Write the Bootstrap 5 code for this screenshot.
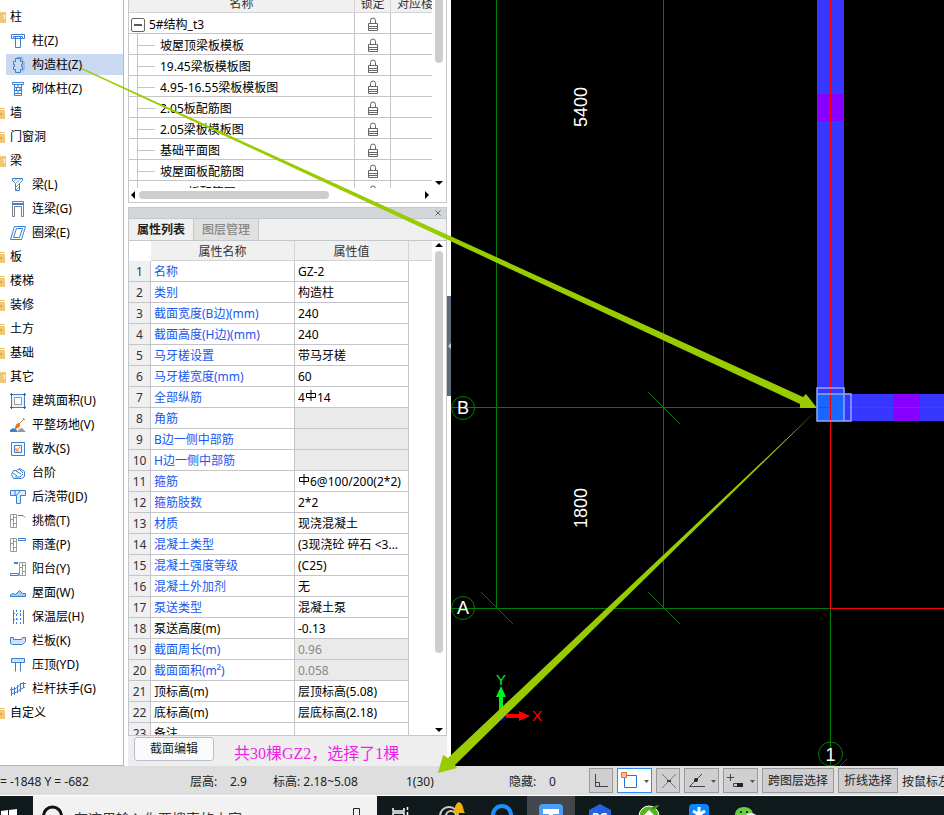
<!DOCTYPE html>
<html lang="zh-CN">
<head>
<meta charset="utf-8">
<meta name="viewport" content="width=device-width, initial-scale=1">
<title>属性列表</title>
<link rel="stylesheet" href="https://cdn.jsdelivr.net/npm/bootstrap@5.3.0/dist/css/bootstrap.min.css">
<style>
body{font:12px/20px "Noto Sans","Noto Sans CJK SC",sans-serif;color:#000;background:#fff}
svg{display:block;flex:none}
button{font:inherit;color:inherit}
/* component tree */
.tree{width:124px;border-right:1px solid #b4b6ba;border-bottom:1px solid #b4b6ba;padding-top:5px}
.tree a{display:flex;align-items:center;height:24px;color:#000;text-decoration:none;white-space:nowrap}
.tree .grp{gap:4px}
.tree .leaf{gap:6px;padding-left:4px;margin-left:6px}
.tree .leaf.active{background:#c9d9ef;height:21px;margin-top:1px;margin-bottom:2px}
.tree .leaf svg{fill:none;stroke:#3a7fd0}
/* docked panels */
.docks{width:327px;padding:0 4px;gap:4px}
.dock{border:1px solid #c4c7cc;background:#fff}
.layerbox{height:188px}
.hbar{height:14px;padding:0 17px 0 2px;gap:4px}
.hthumb{width:190px;height:8px}
.vthumb{width:8px;height:402px}
.vthumb-top{width:8px;height:63px}
.grid{table-layout:fixed;width:100%;border-collapse:separate;border-spacing:0}
.grid td,.grid th{height:21px;line-height:18px;padding:2px 3px 0;border-right:1px solid #c4c4c9;border-bottom:1px solid #c4c4c9;white-space:nowrap;overflow:hidden;text-overflow:ellipsis}
.grid th{height:20px;line-height:17px;font-weight:400;text-align:center;background:#f0f0f0;color:#333;border-color:#d4d4d8}
.grid tr>:last-child{border-right:0}
.layers{margin-top:-7px}
.layers td{text-overflow:clip;line-height:16px;padding-top:4px}
.layers td:first-child{padding-left:31px;background:linear-gradient(#c4c4c9,#c4c4c9) 8px 0/1px 100% no-repeat,linear-gradient(#c4c4c9,#c4c4c9) 9px 11px/17px 1px no-repeat}
.layers tr.root td:first-child{padding-left:2px;padding-top:3px;background:none}
.layers td>svg{margin:-2px auto 0}
.layers th:last-child{text-align:left;padding-left:6px;text-overflow:clip}
.expander{width:14px;height:14px;border:1px solid #666;border-radius:2px;background:#fff;padding:0}
.vbar{width:14px}
.vbar.full{padding:2px 0 3px}
.thumb{background:#cdcdcd;border-radius:4px}
.titlebar{height:11px;background:#d3d6db;border-bottom:1px solid #c4c7cc}
.tabs{height:22px;background:#efefef;border-bottom:1px solid #c4c7cc}
.tabs button{width:65px;height:21px;border:0;border-right:1px solid #c4c7cc;background:#e0e0e0;color:#888;font-weight:500;padding:0}
.tabs button.active{background:#f0f0f0;color:#222;font-weight:600}
.props td:first-child{background:#f0f0f0;text-align:center;color:#333;padding-left:0;padding-right:0}
.props th:first-child{background:#fff;border:0}
.props td:nth-child(2){color:#1857f0}
.props .plain td:nth-child(2){color:#000}
.props .off td:nth-child(3){background:#eaeaea;color:#888}
.props td:nth-child(4){border:0}
.props .bar{display:inline-block;vertical-align:1px}
.dockfoot{height:30px;background:#eee;padding:0 6px;gap:20px}
.dockfoot button{width:80px;height:24px;border:1px solid #b8c0d0;border-radius:3px;background:#fafafa;color:#222;padding:0}
.note{font:16px/20px "Liberation Serif","Noto Sans CJK SC",serif;color:#f01ee6;padding-top:10px}
.handle{width:4px;height:100px;background:#5f6b78}
.splitter{width:4px;padding-top:296px;margin-left:-4px}
.drawing{background:#000;font-family:"Liberation Sans",sans-serif}
/* bottom bars */
.status{height:30px;background:#dededf;border-bottom:1px solid #fff;color:#222;white-space:nowrap}
.status span{flex:none;padding-top:2px}
.s1{width:190px}.s2{width:40px}.s3{width:43px}.s4{width:133px}.s5{width:103px}.s6{width:40px}
.tools{gap:4px}
.tools button{height:25px;border:1px solid #999;background:#cfcfd1;padding:1px 5px 0;flex:none}
.tools .sq{width:24px;padding:0 4px}
.tools .dd{width:35px;padding:0 3px}
.tools .picked{background:#fff;border-color:#2f8cf0}
.taskbar{height:19px;background:#10191b}
.taskrow{height:40px}
.start{width:33px;padding:13px 0 0 1px}
.search{width:344px;background:#f2f2f2;padding:0 16px 0 9px}
.search input{border:0;background:none;font-size:14px;height:24px;padding:0;margin-left:11px;margin-top:4px;min-width:0}
.search input::placeholder{color:#333;opacity:1}
.apps{gap:2px}
.apps button{width:48px;height:40px;border:0;padding:0;background:none}
.apps .open{background:#41474a}
.marks{left:0;top:0;pointer-events:none}
</style>
</head>
<body>
<div class="d-flex flex-column vh-100 overflow-hidden position-relative">
<main class="d-flex flex-grow-1 overflow-hidden">
<nav class="tree flex-shrink-0 overflow-hidden" aria-label="构件">
<svg width="0" height="0" class="position-absolute"><defs>
<g id="fo"><path d="M0 1H6V12H0Z" fill="#f0c878"/><path d="M0 4H3L5 9V4Z" fill="#fff5dc"/></g>
<g id="fc"><path d="M0 1H5V12H0Z" fill="#f0c878"/><path d="M0 2.500H5" stroke="#fff"/><path d="M0 7H2" stroke="#b98930"/></g>
</defs></svg>
<a class="grp" href="#"><svg width="6" height="13"><use href="#fo"/></svg>柱</a>
<a class="leaf" href="#"><svg width="16" height="16"><path d="M1.500 1.500h13v4h-2v-2h-9v2h-2zM5.500 3.500v11h5v-11M4 5.500h8"/></svg>柱(Z)</a>
<a class="leaf active" href="#"><svg width="16" height="16"><path d="M5.500 1.500h5v3h2v3h-1v2h1v3h-2v3h-5v-3h-2v-3h1v-2h-1v-3h2z"/><path d="M7 .5h5v3l2 1v8l-2 2" stroke="#8a9bb0"/></svg>构造柱(Z)</a>
<a class="leaf" href="#"><svg width="16" height="16"><path d="M2.500 1.500h11v2h-11zM4.500 3.500v11h7v-11M4.500 6.500h7M4.500 9.500h7M4.500 12.500h7M8 4v2M6.500 7v2M10 7v2M8 10v2"/></svg>砌体柱(Z)</a>
<a class="grp" href="#"><svg width="6" height="13"><use href="#fc"/></svg>墙</a>
<a class="grp" href="#"><svg width="6" height="13"><use href="#fc"/></svg>门窗洞</a>
<a class="grp" href="#"><svg width="6" height="13"><use href="#fo"/></svg>梁</a>
<a class="leaf" href="#"><svg width="16" height="16"><path d="M2.500 1.500h10v2l-3 3v7h-4v-7l-3-3z"/><path d="M4 4l3-2M6 6l5-4M6 10l3-3M6 13l3-3" stroke="#8aa"/></svg>梁(L)</a>
<a class="leaf" href="#"><svg width="16" height="16"><path d="M2.500 .5h11v15h-2v-10h-7v10h-2z" stroke="#777f88"/><path d="M3 3h10" stroke-width="2"/></svg>连梁(G)</a>
<a class="leaf" href="#"><svg width="16" height="16"><path d="M4.500 1.500h11l-4 13h-11zM6.500 3.500h6l-3 9h-6z"/></svg>圈梁(E)</a>
<a class="grp" href="#"><svg width="6" height="13"><use href="#fc"/></svg>板</a>
<a class="grp" href="#"><svg width="6" height="13"><use href="#fc"/></svg>楼梯</a>
<a class="grp" href="#"><svg width="6" height="13"><use href="#fc"/></svg>装修</a>
<a class="grp" href="#"><svg width="6" height="13"><use href="#fc"/></svg>土方</a>
<a class="grp" href="#"><svg width="6" height="13"><use href="#fc"/></svg>基础</a>
<a class="grp" href="#"><svg width="6" height="13"><use href="#fo"/></svg>其它</a>
<a class="leaf" href="#"><svg width="16" height="16"><path d="M1.500 1.500h13v13h-13z" fill="#eaf3fd"/><path d="M0 1.500h3M13 1.500h3M0 14.500h3M13 14.500h3M1.500 0v3M14.500 0v3M1.500 13v3M14.500 13v3" stroke="#36608f"/><path d="M4.500 4.500h7v7h-7z" stroke="#999" fill="#fff"/></svg>建筑面积(U)</a>
<a class="leaf" href="#"><svg width="16" height="16"><path d="M0 15v-2l3-2 3 1 2 3z" fill="#3a7fd0" stroke="none"/><path d="M7 15l2-3 3-1 4 4z" fill="#999" stroke="none"/><path d="M9 7l5-5M13 1l2 2" stroke="#ee7a30"/><path d="M5 12c0-4 2-6 4-6 2 2 1 5-4 6z" fill="#f07020" stroke="none"/></svg>平整场地(V)</a>
<a class="leaf" href="#"><svg width="16" height="16"><path d="M1.500 1.500h13v13h-13zM4.500 4.500h7v7h-7z" fill="#f2f8ff"/><path d="M10 6l-4 4M6 7v3h3" stroke="#ee7a30"/></svg>散水(S)</a>
<a class="leaf" href="#"><svg width="16" height="16"><path d="M1.500 9.500l2-4h3l3-2 5 3v5l-3 2h-8zM3 8l4 3M6 6l5 3M9 4l4 4M5 12h5l3-3"/></svg>台阶</a>
<a class="leaf" href="#"><svg width="16" height="16"><path d="M.5 1.500h15v5h-5v8h-4v-8h-6z" fill="#dcecfc"/><path d="M6 7l4-5M5 1.500v5"/></svg>后浇带(JD)</a>
<a class="leaf" href="#"><svg width="16" height="16"><path d="M.5 1.500h6v13h-6zM3.500 1v14M.5 6.500h3M3.500 10.500h3M3.500 4.500h3" stroke="#999"/><path d="M8 2.500h5l2 2"/></svg>挑檐(T)</a>
<a class="leaf" href="#"><svg width="16" height="16"><path d="M.5 1.500h6v13h-6zM3.500 1v14M.5 6.500h3M3.500 10.500h3M3.500 4.500h3" stroke="#999"/><path d="M8.500 1.500h7v2h-7z"/></svg>雨蓬(P)</a>
<a class="leaf" href="#"><svg width="16" height="16"><path d="M9.500 1.500h6v13h-6zM12.500 1v14M9.500 6.500h3M12.500 10.500h3M12.500 4.500h3" stroke="#999"/><path d="M4 2h4" stroke-width="2"/><path d="M.5 12.500h8v2h-8z"/></svg>阳台(Y)</a>
<a class="leaf" href="#"><svg width="16" height="16"><path d="M.5 11.500v-2l3-1 2 1 4-4 3 3h3v3z" fill="#a9c9ef"/></svg>屋面(W)</a>
<a class="leaf" href="#"><svg width="16" height="16"><path d="M3.500 1v14M13.500 1v14"/><path d="M6.500 1v14M10.500 1v14" stroke-dasharray="2 2"/><path d="M4 4.500h9M4 10.500h9" stroke-dasharray="1 2"/></svg>保温层(H)</a>
<a class="leaf" href="#"><svg width="16" height="16"><path d="M.5 4.500h3v2h8l1-2h3v4l-3 3h-10l-2-1z" fill="#cfe2f8"/></svg>栏板(K)</a>
<a class="leaf" href="#"><svg width="16" height="16"><path d="M1.500 1.500h13v4h-13z" fill="#cfe2f8"/><path d="M5.500 5.500v9M10.500 5.500v9"/></svg>压顶(YD)</a>
<a class="leaf" href="#"><svg width="16" height="16"><path d="M1.500 6v9M4.500 6v8M7.500 4v8M10.500 2v9M13.500 1v6M0 8.500h2l4-1 3-3 2-2h5M1 13l3-1 3-1 4-3 4-2"/></svg>栏杆扶手(G)</a>
<a class="grp" href="#"><svg width="6" height="13"><use href="#fc"/></svg>自定义</a>
</nav>
<div class="docks d-flex flex-column flex-shrink-0">
<section class="dock border-top-0 flex-shrink-0">
<div class="layerbox d-flex overflow-hidden">
<div class="flex-grow-1 overflow-hidden">
<svg width="0" height="0" class="position-absolute"><symbol id="lk" viewBox="0 0 12 14"><path d="M3.500 6V3.500a2.500 2.500 0 0 1 5 0V6M1.500 6.500h9v7h-9zM1 9.500h10M1 11.500h10" fill="none" stroke="#666"/></symbol></svg>
<table class="grid layers"><colgroup><col style="width:226px"><col style="width:36px"><col></colgroup>
<thead><tr><th>名称</th><th>锁定</th><th>对应楼层</th></tr></thead>
<tbody>
<tr class="root"><td><div class="d-flex align-items-center gap-1"><button class="expander" aria-label="折叠"><svg width="12" height="12"><path d="M2 6h8" stroke="#222" stroke-width="1.500"/></svg></button><span>5#结构_t3</span></div></td><td><svg width="12" height="14"><use href="#lk"/></svg></td><td></td></tr>
<tr><td>坡屋顶梁板模板</td><td><svg width="12" height="14"><use href="#lk"/></svg></td><td></td></tr>
<tr><td>19.45梁板模板图</td><td><svg width="12" height="14"><use href="#lk"/></svg></td><td></td></tr>
<tr><td>4.95-16.55梁板模板图</td><td><svg width="12" height="14"><use href="#lk"/></svg></td><td></td></tr>
<tr><td>2.05板配筋图</td><td><svg width="12" height="14"><use href="#lk"/></svg></td><td></td></tr>
<tr><td>2.05梁板模板图</td><td><svg width="12" height="14"><use href="#lk"/></svg></td><td></td></tr>
<tr><td>基础平面图</td><td><svg width="12" height="14"><use href="#lk"/></svg></td><td></td></tr>
<tr><td>坡屋面板配筋图</td><td><svg width="12" height="14"><use href="#lk"/></svg></td><td></td></tr>
<tr><td>-0.05板配筋图</td><td><svg width="12" height="14"><use href="#lk"/></svg></td><td></td></tr>
</tbody></table>
</div>
<div class="vbar d-flex flex-column align-items-center flex-shrink-0"><div class="thumb vthumb-top rounded-top-0"></div><svg class="mt-auto" width="8" height="7"><path d="M0 0h8L4 4z"/></svg></div>
</div>
<div class="hbar d-flex align-items-center"><svg width="4" height="8"><path d="M4 0v8L0 4z"/></svg><div class="thumb hthumb"></div><svg class="ms-auto" width="4" height="8"><path d="M0 0v8l4-4z"/></svg></div>
</section>
<section class="d-flex flex-column flex-grow-1 overflow-hidden">
<div class="dock d-flex flex-column flex-grow-1 overflow-hidden">
<div class="titlebar d-flex align-items-center justify-content-end pe-1 flex-shrink-0"><svg width="8" height="8"><path d="M1.500 1.500l5 5M6.500 1.500l-5 5" stroke="#666"/></svg></div>
<div class="tabs d-flex flex-shrink-0" role="tablist"><button class="active" role="tab">属性列表</button><button role="tab">图层管理</button></div>
<div class="d-flex flex-grow-1 overflow-hidden">
<div class="flex-grow-1 overflow-hidden">
<table class="grid props"><colgroup><col style="width:22px"><col style="width:144px"><col style="width:114px"><col></colgroup>
<thead><tr><th></th><th>属性名称</th><th>属性值</th><th></th></tr></thead>
<tbody>
<tr><td>1</td><td>名称</td><td>GZ-2</td><td></td></tr>
<tr><td>2</td><td>类别</td><td>构造柱</td><td></td></tr>
<tr><td>3</td><td>截面宽度(B边)(mm)</td><td>240</td><td></td></tr>
<tr><td>4</td><td>截面高度(H边)(mm)</td><td>240</td><td></td></tr>
<tr><td>5</td><td>马牙槎设置</td><td>带马牙槎</td><td></td></tr>
<tr><td>6</td><td>马牙槎宽度(mm)</td><td>60</td><td></td></tr>
<tr><td>7</td><td>全部纵筋</td><td>4<svg class="bar" width="12" height="11"><path d="M1.500 3.500h9v4h-9zM6 0v11" fill="none" stroke="#000"/></svg>14</td><td></td></tr>
<tr class="off"><td>8</td><td>角筋</td><td></td><td></td></tr>
<tr class="off"><td>9</td><td>B边一侧中部筋</td><td></td><td></td></tr>
<tr class="off"><td>10</td><td>H边一侧中部筋</td><td></td><td></td></tr>
<tr><td>11</td><td>箍筋</td><td><svg class="bar" width="12" height="11"><path d="M1.500 3.500h9v4h-9zM6 0v11" fill="none" stroke="#000"/></svg>6@100/200(2*2)</td><td></td></tr>
<tr><td>12</td><td>箍筋肢数</td><td>2*2</td><td></td></tr>
<tr><td>13</td><td>材质</td><td>现浇混凝土</td><td></td></tr>
<tr><td>14</td><td>混凝土类型</td><td>(3现浇砼 碎石 &lt;3...</td><td></td></tr>
<tr><td>15</td><td>混凝土强度等级</td><td>(C25)</td><td></td></tr>
<tr><td>16</td><td>混凝土外加剂</td><td>无</td><td></td></tr>
<tr><td>17</td><td>泵送类型</td><td>混凝土泵</td><td></td></tr>
<tr class="plain"><td>18</td><td>泵送高度(m)</td><td>-0.13</td><td></td></tr>
<tr class="off"><td>19</td><td>截面周长(m)</td><td>0.96</td><td></td></tr>
<tr class="off"><td>20</td><td>截面面积(m²)</td><td>0.058</td><td></td></tr>
<tr class="plain"><td>21</td><td>顶标高(m)</td><td>层顶标高(5.08)</td><td></td></tr>
<tr class="plain"><td>22</td><td>底标高(m)</td><td>层底标高(2.18)</td><td></td></tr>
<tr class="plain"><td>23</td><td>备注</td><td></td><td></td></tr>
</tbody></table>
</div>
<div class="vbar full d-flex flex-column align-items-center flex-shrink-0"><svg class="mb-1" width="8" height="4"><path d="M0 4h8L4 0z"/></svg><div class="thumb vthumb"></div><svg class="mt-auto" width="8" height="4"><path d="M0 0h8L4 4z"/></svg></div>
</div>
</div>
<div class="dockfoot d-flex align-items-center flex-shrink-0 pb-1"><button>截面编辑</button><span class="note text-nowrap">共30棵GZ2，选择了1棵</span></div>
</section>
</div>
<div class="splitter flex-shrink-0"><div class="handle d-flex align-items-center"><svg width="4" height="8"><path d="M4 1v6L1 4z" fill="#c5ccd4"/></svg></div></div>
<div class="drawing flex-grow-1 overflow-hidden">
<svg width="100%" height="100%" role="img" aria-label="轴网图">
<g transform="translate(-451)" fill="none" stroke-width="1">
<g stroke="#008000"><path d="M496.500 0V608M663.500 0V608M451 407.500H817M451 608.500H830M830.500 608V766"/><path d="M481 592l32 32M648 592l32 32M648 392l32 32M840 766l7-7" stroke="#007000"/>
<circle cx="463" cy="408" r="11.500"/><circle cx="463" cy="608" r="11.500"/><circle cx="830.500" cy="754" r="12"/></g>
<path d="M817 0h27v388h-27zM844 394H1600v27H844z" fill="#3737ff"/>
<path d="M817 94h27v27h-27zM893 394h27v27h-27z" fill="#8800ff"/>
<path d="M817 388h27v6h7v27h-34z" fill="#3737ff"/><path d="M817 394h27v27h-27z" fill="#1a66ff"/>
<path d="M830.500 0V608M830 608.500H1600" stroke="#f00"/><path d="M844 407.500H1600" stroke="#e01040"/><path d="M817 407.500H830" stroke="#008040"/>
<path d="M817 388h27v33h-27zM817 394h34v27h-34z" stroke="#8aacff" stroke-width="1.500"/>
<g fill="#fff" font-size="18" text-anchor="middle"><text x="463" y="414">B</text><text x="463" y="614">A</text><text x="830.500" y="761">1</text><text transform="translate(587 107)rotate(-90)">5400</text><text transform="translate(587 508)rotate(-90)">1800</text></g>
<circle cx="501.500" cy="716" r="5" fill="#0000b4"/>
<path d="M499 712v-15h-3l5-11 5 11h-3v15z" fill="#00f020"/><path d="M506 714h13v-3l11 5-11 5v-3h-13z" fill="#f00"/>
<g font-size="15" text-anchor="middle"><text x="501" y="685" fill="#00f020">Y</text><text x="537" y="721" fill="#f00">X</text></g>
</g></svg>
</div>
</main>
<footer class="flex-shrink-0">
<div class="status d-flex align-items-center overflow-hidden"><span class="s1">= -1848 Y = -682</span><span class="s2">层高:</span><span class="s3">2.9</span><span class="s4">标高: 2.18~5.08</span><span class="s5">1(30)</span><span class="s6">隐藏:</span><span class="s6">0</span>
<div class="tools d-flex align-items-center flex-shrink-0">
<button class="sq" aria-label="正交"><svg width="15" height="15"><path d="M1.500 1v12.500H14M1.500 9.500h4v4" fill="none" stroke="#444"/></svg></button>
<button class="dd picked" aria-label="框选"><svg width="28" height="18"><path d="M3.500 3.500h12v12h-12z" fill="none" stroke="#2878d8"/><path d="M.5 .5h5v5h-5z" fill="#ffc090" stroke="#e07030"/><path d="M23 8h5l-2.500 3z" fill="#555"/></svg></button>
<button class="sq" aria-label="交点"><svg width="15" height="16"><path d="M1 1l14 14M15 1L1 15" stroke="#777"/><path d="M6 8h4" stroke="#444" stroke-width="2"/></svg></button>
<button class="dd" aria-label="角度"><svg width="28" height="16"><path d="M14 1L1.500 13.500H17" fill="none" stroke="#444"/><circle cx="8" cy="7" r="2" fill="#222"/><path d="M23 7h5l-2.500 3z" fill="#555"/></svg></button>
<button class="dd" aria-label="偏移"><svg width="28" height="16"><path d="M0 4.500h7M3.500 1v7M6.500 10.500h9v3h-9z" fill="none" stroke="#444"/><path d="M10 10h6v4h-6z" fill="#222"/><path d="M23 7h5l-2.500 3z" fill="#555"/></svg></button>
<button>跨图层选择</button><button>折线选择</button><span>按鼠标左键选择</span>
</div></div>
<div class="taskbar overflow-hidden"><div class="taskrow d-flex">
<div class="start flex-shrink-0"><svg width="16" height="16"><path d="M0 2l7-1v7H0zM8 1l8-1v8H8zM0 9h7v6l-7-1zM8 9h8v7l-8-1z" fill="#fff"/></svg></div>
<div class="search d-flex align-items-center flex-shrink-0"><svg width="21" height="22"><circle cx="10.500" cy="11" r="9" fill="none" stroke="#111" stroke-width="3"/></svg><input class="flex-grow-1" type="text" aria-label="搜索" placeholder="在这里输入你要搜索的内容"><svg width="8" height="18"><path d="M.5 1.500h6v12h-6z" fill="none" stroke="#222"/></svg></div>
<div class="apps d-flex">
<button aria-label="任务视图"><svg width="48" height="40"><path d="M16 12v3h11v-3M16 26v-9h11v9M30.500 11v3M30.500 16v10" fill="none" stroke="#fff" stroke-width="1.500"/></svg></button>
<button aria-label="通知"><svg width="48" height="40"><circle cx="22" cy="20" r="9" fill="none" stroke="#ccc" stroke-width="2"/><circle cx="24" cy="20" r="5" fill="none" stroke="#ccc" stroke-width="2"/><path d="M26 17c2-2 1-9 6-11 5 2 4 9 6 11z" fill="#f0b010"/></svg></button>
<button aria-label="浏览器"><svg width="48" height="40"><circle cx="25" cy="19" r="9" fill="none" stroke="#1890ff" stroke-width="4"/></svg></button>
<button class="open" aria-label="算量"><svg width="48" height="40"><rect x="12" y="8" width="24" height="24" rx="4" fill="#4d9cf5"/><path d="M16 13h16v5h-6v12h-4V18h-6z" fill="#fff"/></svg></button>
<button aria-label="PG"><svg width="48" height="40"><path d="M23 8l11 6v14H12V14z" fill="#2562df"/><text x="23" y="26" text-anchor="middle" font-size="12" font-weight="700" fill="#fff">PG</text></svg></button>
<button aria-label="安全"><svg width="48" height="40"><circle cx="22" cy="20" r="10" fill="#58b61c" stroke="#fff"/><path d="M17 19l5-5 5 5z" fill="#fff"/><path d="M24 13c2-3 5-4 8-4-1 3-4 5-8 4z" fill="#388e18"/></svg></button>
<button aria-label="协作"><svg width="48" height="40"><rect x="12" y="8" width="20" height="24" rx="4" fill="#0a84ff"/><path d="M22 11v16M16 15l12 7M28 15l-12 7" stroke="#fff" stroke-width="3"/></svg></button>
<button aria-label="微信"><svg width="48" height="40"><ellipse cx="17" cy="18" rx="9" ry="7" fill="#67cf3c"/><ellipse cx="24" cy="23" rx="7" ry="6" fill="#eee"/><path d="M13 16h2M19 16h2" stroke="#234" stroke-width="2"/></svg></button>
</div></div></div>
</footer>
<svg class="marks position-absolute w-100 h-100" fill="#99cc00"><path d="M82 68L803 397 806 394 817 408H800L800 404 81 69z"/><path d="M816 411L448 758 443 755 438 773 457 768 455 765z"/></svg>
</div>
<script src="https://cdn.jsdelivr.net/npm/bootstrap@5.3.0/dist/js/bootstrap.bundle.min.js"></script>
</body>
</html>
